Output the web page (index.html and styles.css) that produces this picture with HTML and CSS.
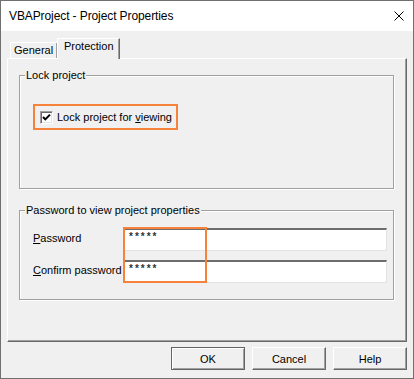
FILE: index.html
```html
<!DOCTYPE html>
<html>
<head>
<meta charset="utf-8">
<link rel="stylesheet" href="styles.css">
</head>
<body>
<div class="window">
  <div class="titlebar">
    <span class="title">VBAProject - Project Properties</span>
    <svg class="close" width="10" height="10" viewBox="0 0 10 10"><path d="M0.5 0.5 L9.5 9.5 M9.5 0.5 L0.5 9.5" stroke="#000" stroke-width="1" fill="none"/></svg>
  </div>
  <div class="body">
    <div class="tabs">
      <div class="tab">General</div>
      <div class="tab active">Protection</div>
    </div>
    <div class="panel">
      <fieldset class="group g1">
        <legend>Lock project</legend>
        <label class="check-hl">
          <span class="checkbox"><svg width="9" height="9" viewBox="0 0 9 9"><path d="M1 4 L3.3 6.4 L8 1.6" stroke="#000" stroke-width="2" fill="none"/></svg></span>
          <span>Lock project for <u>v</u>iewing</span>
        </label>
      </fieldset>
      <fieldset class="group g2">
        <legend>Password to view project properties</legend>
        <div class="rows">
          <div class="row"><span class="lbl"><u>P</u>assword</span><div class="input">*****</div></div>
          <div class="row"><span class="lbl"><u>C</u>onfirm password</span><div class="input">*****</div></div>
          <div class="hl"></div>
        </div>
      </fieldset>
    </div>
    <div class="buttons">
      <button class="btn default">OK</button>
      <button class="btn">Cancel</button>
      <button class="btn">Help</button>
    </div>
  </div>
</div>
</body>
</html>
```
FILE: styles.css
```css
* { box-sizing: border-box; }
html, body { margin: 0; padding: 0; background: #f0f0f0; }
body { font-family: "Liberation Sans", Arial, sans-serif; font-size: 11px; color: #000; }

.window {
  width: 414px;
  height: 379px;
  border: 1px solid #707070;
  background: #f0f0f0;
  display: flex;
  flex-direction: column;
}

.titlebar {
  height: 30px;
  background: #fff;
  display: flex;
  align-items: center;
  padding-left: 8px;
  padding-right: 9px;
}
.title { font-size: 12px; line-height: 14px; color: #000; letter-spacing: -0.1px; }
.close { margin-left: auto; display: block; }

.body { flex: 1; display: flex; flex-direction: column; padding: 7px 6px 0 6px; }

.tabs { display: flex; align-items: flex-end; padding-left: 3px; }
.tab {
  height: 16px;
  width: 48px;
  background: #f0f0f0;
  border-top: 1px solid #fff;
  border-left: 1px solid #fff;
  border-right: 1px solid #696969;
  box-shadow: inset -1px 0 0 #a0a0a0;
  padding-left: 3px;
  line-height: 14px;
}
.tab.active {
  width: 63px;
  height: 21px;
  margin-left: -1px;
  margin-bottom: -1px;
  padding-left: 6px;
  line-height: 15px;
  position: relative;
  z-index: 1;
}

.panel {
  height: 284px;
  border-top: 1px solid #fff;
  border-left: 1px solid #fff;
  border-right: 1px solid #696969;
  border-bottom: 1px solid #696969;
  box-shadow: inset -1px -1px 0 #a0a0a0;
  padding: 10px 12px 0 11px;
  display: flex;
  flex-direction: column;
}

.group {
  margin: 0;
  padding: 0;
  border: 1px solid #a0a0a0;
  box-shadow: inset 1px 1px 0 #fff, 1px 1px 0 #fff;
  min-inline-size: 0;
}
.group legend {
  margin-left: 5px;
  padding: 0 1px;
  line-height: 13px;
  background: #f0f0f0;
}
.g2 { margin-top: 15px; }

.check-hl {
  display: inline-flex;
  align-items: center;
  height: 26px;
  border: 2px solid #f6823c;
  margin: 22px 0 58px 13px;
  padding: 0 4px 0 5px;
  gap: 4px;
}
.checkbox {
  width: 13px;
  height: 13px;
  background: #fff;
  border-top: 1px solid #a0a0a0;
  border-left: 1px solid #a0a0a0;
  border-right: 1px solid #fff;
  border-bottom: 1px solid #fff;
  box-shadow: inset 1px 1px 0 #696969, inset -1px -1px 0 #e3e3e3;
  display: flex;
  align-items: center;
  justify-content: center;
}
.checkbox svg { display: block; }

.rows {
  position: relative;
  margin: 11px 6px 16px 13px;
  display: flex;
  flex-direction: column;
  gap: 9px;
}
.row { display: flex; align-items: center; height: 23px; }
.lbl { width: 91px; line-height: 13px; margin-top: -3px; }
.input {
  flex: 1;
  height: 23px;
  background: #fff;
  border-top: 2px solid #6d6d6d;
  border-left: 1px solid #a0a0a0;
  border-right: 1px solid #e3e3e3;
  border-bottom: 1px solid #e3e3e3;
  padding: 1px 0 0 4px;
  font-size: 10px;
  line-height: 12px;
  letter-spacing: 2px;
  font-weight: bold;
  color: #333;
}
.hl {
  position: absolute;
  left: 90px;
  top: -1px;
  width: 84px;
  height: 56px;
  border: 2px solid #f6823c;
}

.buttons { display: flex; justify-content: flex-end; gap: 7px; margin-top: 5px; }
.btn {
  width: 74px;
  height: 23px;
  font-family: "Liberation Sans", Arial, sans-serif;
  font-size: 11px;
  color: #000;
  background: #f0f0f0;
  border-top: 1px solid #fff;
  border-left: 1px solid #fff;
  border-right: 1px solid #696969;
  border-bottom: 1px solid #696969;
  box-shadow: inset -1px -1px 0 #a0a0a0;
  padding: 0;
  margin: 0;
}
.btn.default {
  border: 1px solid #646464;
  box-shadow: inset 1px 1px 0 #fff, inset -1px -1px 0 #a0a0a0;
}
```
